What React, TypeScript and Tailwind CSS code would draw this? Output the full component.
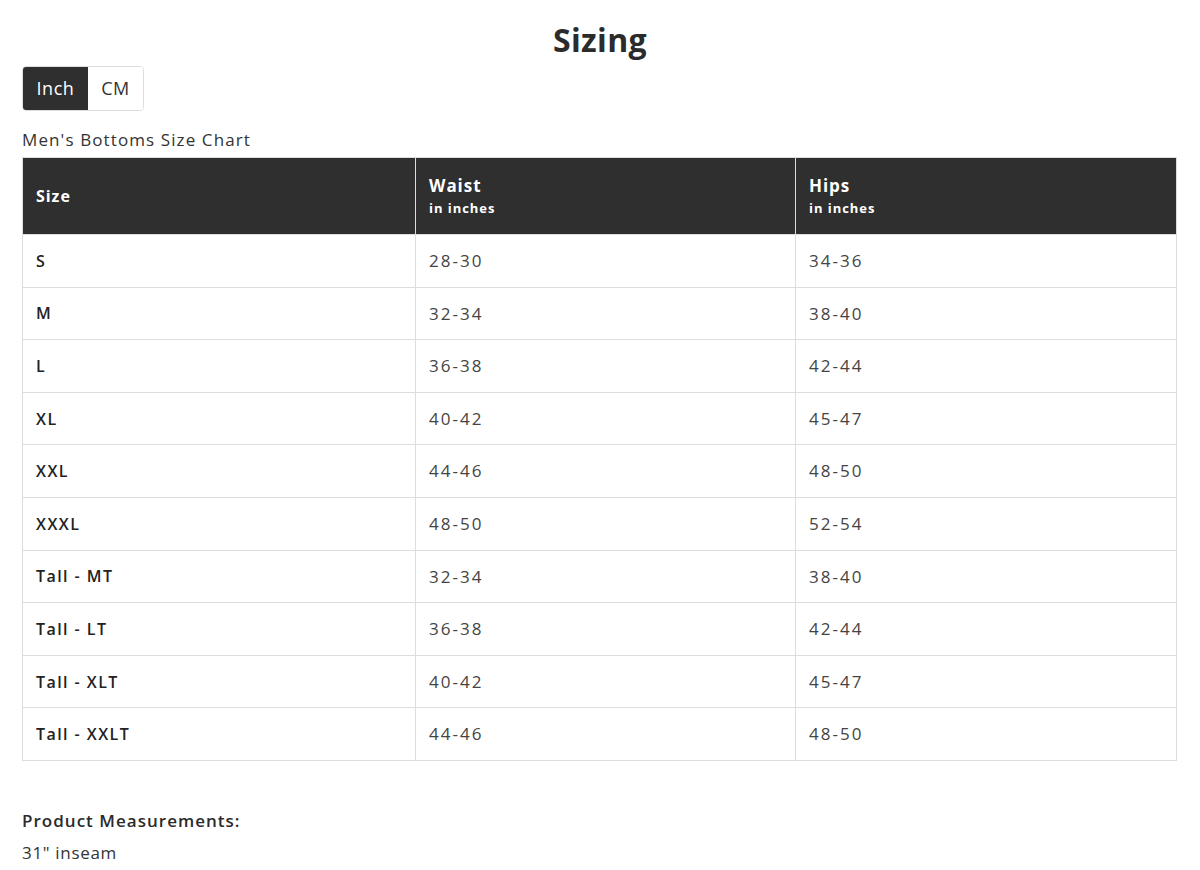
import React from "react";

const rows = [
  ["S", "28-30", "34-36"],
  ["M", "32-34", "38-40"],
  ["L", "36-38", "42-44"],
  ["XL", "40-42", "45-47"],
  ["XXL", "44-46", "48-50"],
  ["XXXL", "48-50", "52-54"],
  ["Tall - MT", "32-34", "38-40"],
  ["Tall - LT", "36-38", "42-44"],
  ["Tall - XLT", "40-42", "45-47"],
  ["Tall - XXLT", "44-46", "48-50"],
];

export default function App() {
  return (
    <div
      className="min-h-[870px] bg-white px-[22px] text-[#333333]"
      style={{ fontFamily: '"Open Sans", "Noto Sans", Arial, sans-serif' }}
    >
      <h1 className="pt-[20px] text-center text-[32px] font-bold leading-[40px] tracking-[0.01em] text-[#2b2b2b]">
        Sizing
      </h1>
      <div className="mt-[6px] flex h-[45px] w-[122px] overflow-hidden rounded-[4px] border border-[#dddddd]">
        <button className="flex w-[65px] items-center justify-center bg-[#2f2f2f] text-[18px] tracking-[0.03em] text-white">
          Inch
        </button>
        <button className="flex flex-1 items-center justify-center bg-white text-[18px] tracking-[0.03em] text-[#333333]">
          CM
        </button>
      </div>
      <div className="mt-[16px] text-[17px] leading-[26px] tracking-[0.065em] text-[#333333]">
        Men's Bottoms Size Chart
      </div>
      <table className="mt-[4px] w-[1155px] border-collapse border border-[#dddddd]">
        <thead>
          <tr className="h-[77px] bg-[#2f2f2f] text-left text-white">
            <th className="w-[393px] border border-[#dddddd] px-[13px] align-middle text-[16px] font-bold tracking-[0.06em]">
              Size
            </th>
            <th className="w-[380px] border border-[#dddddd] px-[13px] align-middle font-bold tracking-[0.06em]">
              <div className="text-[17px] leading-[24px]">Waist</div>
              <div className="text-[13px] leading-[20px]">in inches</div>
            </th>
            <th className="border border-[#dddddd] px-[13px] align-middle font-bold tracking-[0.06em]">
              <div className="text-[17px] leading-[24px]">Hips</div>
              <div className="text-[13px] leading-[20px]">in inches</div>
            </th>
          </tr>
        </thead>
        <tbody>
          {rows.map((r) => (
            <tr key={r[0]} className="h-[52.6px]">
              <td className="border border-[#dddddd] px-[13px] text-[16px] font-semibold tracking-[0.09em] text-[#222222]">
                {r[0]}
              </td>
              <td className="border border-[#dddddd] px-[13px] text-[17px] tracking-[0.12em] text-[#444444]">
                {r[1]}
              </td>
              <td className="border border-[#dddddd] px-[13px] text-[17px] tracking-[0.12em] text-[#444444]">
                {r[2]}
              </td>
            </tr>
          ))}
        </tbody>
      </table>
      <div className="mt-[44px] text-[17px] font-semibold leading-[32px] tracking-[0.06em] text-[#2b2b2b]">
        Product Measurements:
      </div>
      <div className="text-[17px] leading-[32px] tracking-[0.04em] text-[#333333]">31" inseam</div>
    </div>
  );
}
